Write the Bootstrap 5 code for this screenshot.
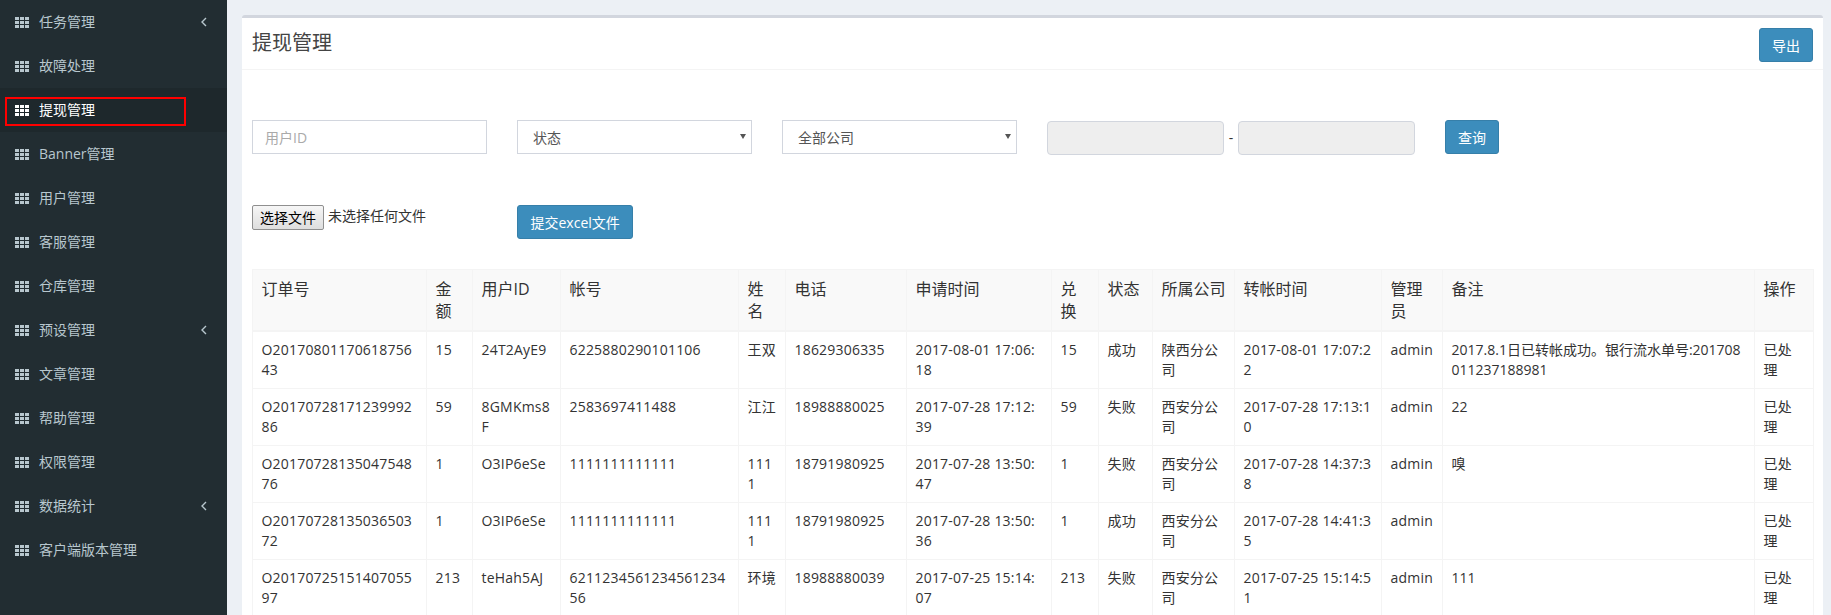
<!DOCTYPE html>
<html lang="zh-CN">
<head>
    <meta charset="UTF-8">
    <title>提现管理</title>
    <link href="https://cdn.jsdelivr.net/npm/bootstrap@5.3.3/dist/css/bootstrap.min.css" rel="stylesheet">
    <style>
        html, body { height: 100%; overflow: hidden; }
        body { background: #ecf0f5; color: #333; font-family: "Open Sans", "Noto Sans CJK SC", sans-serif; font-size: 14px; }
        .shell { height: 615px; overflow: hidden; }
        .side-menu { width: 227px; flex: none; background: #222d32; }
        .side-link { height: 44px; padding: 0 15px; color: #b8c7ce; font-size: 14px; text-decoration: none; gap: 10px; }
        .side-link span { padding-bottom: 2px; }
        .side-link.on { background: #1e282c; color: #fff; position: relative; }
        .side-link.on::after { content: ""; position: absolute; left: 5px; top: 9px; width: 181px; height: 29px; border: 2px solid #f00; }
        .side-link svg { flex: none; }
        .side-arrow { margin-left: auto; margin-right: 5px; }
        .work { flex: 1; min-width: 0; padding: 15px 8px 0 15px; }
        .panel-box { background: #fff; border-top: 3px solid #d2d6de; border-radius: 3px 3px 0 0; height: 700px; }
        .panel-head { height: 52px; padding: 10px 10px 0; border-bottom: 1px solid #f4f4f4; }
        .panel-title { font-size: 20px; color: #444; font-weight: 400; margin: 1px 0 0; line-height: 28px; }
        .blue-btn { background: #3c8dbc; border: 1px solid #367fa9; color: #fff; font-size: 14px; height: 34px; padding: 0 12.5px; border-radius: 3px; }
        .blue-btn:hover { background: #367fa9; color: #fff; }
        .short-btn { width: 54px; padding: 0; }
        .filter-row { padding: 50px 10px 0; }
        .filter-gap { margin-left: 30px; }
        .filter-field { width: 235px; height: 34px; border: 1px solid #d2d6de; border-radius: 0; font-size: 14px; padding: 0 12px; color: #555; background: #fff; }
        .filter-field::placeholder { color: #aaa; }
        .select-wrap { position: relative; width: 235px; }
        .select-wrap select { appearance: none; width: 100%; padding: 1px 15px 0; }
        .select-wrap::after { content: ""; position: absolute; right: 6px; top: 14px; border: 3px solid transparent; border-top: 5px solid #555; border-bottom: 0; }
        .date-range { height: 34px; }
        .date-field { width: 177px; height: 34px; margin-top: 1px; background: #eee; border: 1px solid #d2d6de; border-radius: 4px; }
        .date-dash { width: 14px; text-align: center; }
        .upload-row { padding: 51px 10px 0; }
        .file-pick { width: 235px; font-size: 14px; color: #333; gap: 4px; height: 34px; }
        .file-btn { font-size: 14px; height: 25px; width: 72px; padding: 0; border: 1px solid #8f8f8f; border-radius: 2px; background: linear-gradient(#f6f6f6, #dedede); color: #000; }
        .table-wrap { padding: 30px 10px 0; }
        .cash-table { table-layout: fixed; width: 1561px; border-collapse: collapse; color: #333; word-break: break-all; }
        .cash-table th, .cash-table td { padding: 8px 8.5px; border: 1px solid #f4f4f4; font-weight: 400; vertical-align: top; }
        .cash-table th { background: #f9f9f9; font-size: 16px; line-height: 22px; border-bottom-width: 2px; }
        .cash-table td { background: #fff; font-size: 14px; line-height: 20px; letter-spacing: .2px; }
        .cash-table td:nth-child(13) { letter-spacing: 0; }
    </style>
</head>
<body>
<div class="shell d-flex">
    <nav class="side-menu d-flex flex-column" id="menu"></nav>
    <main class="work">
        <div class="panel-box">
            <div class="panel-head d-flex justify-content-between align-items-start">
                <h3 class="panel-title">提现管理</h3>
                <button class="blue-btn short-btn" type="button">导出</button>
            </div>
            <div class="filter-row d-flex align-items-start">
                <input class="filter-field" type="text" placeholder="用户ID">
                <div class="select-wrap filter-gap"><select class="filter-field"><option>状态</option></select></div>
                <div class="select-wrap filter-gap"><select class="filter-field"><option>全部公司</option></select></div>
                <div class="date-range d-flex align-items-center filter-gap">
                    <input class="date-field" type="text" disabled>
                    <span class="date-dash">-</span>
                    <input class="date-field" type="text" disabled>
                </div>
                <button class="blue-btn short-btn filter-gap" type="button">查询</button>
            </div>
            <div class="upload-row d-flex align-items-start">
                <div class="file-pick d-flex align-items-start">
                    <button class="file-btn" type="button">选择文件</button>
                    <span>未选择任何文件</span>
                </div>
                <button class="blue-btn filter-gap" type="button">提交excel文件</button>
            </div>
            <div class="table-wrap">
                <table class="cash-table">
                    <colgroup id="cols"></colgroup>
                    <thead><tr id="head"></tr></thead>
                    <tbody id="rows"></tbody>
                </table>
            </div>
        </div>
    </main>
</div>
<script src="https://cdn.jsdelivr.net/npm/bootstrap@5.3.3/dist/js/bootstrap.bundle.min.js"></script>
<script>
    const gridIcon = '<svg width="14" height="11" viewBox="0 0 14 11" fill="currentColor"><rect width="4" height="3"/><rect x="5" width="4" height="3"/><rect x="10" width="4" height="3"/><rect y="4" width="4" height="3"/><rect x="5" y="4" width="4" height="3"/><rect x="10" y="4" width="4" height="3"/><rect y="8" width="4" height="3"/><rect x="5" y="8" width="4" height="3"/><rect x="10" y="8" width="4" height="3"/></svg>';
    const arrowIcon = '<svg class="side-arrow" width="6" height="10" viewBox="0 0 6 10" fill="none" stroke="currentColor" stroke-width="1.4"><path d="M5 1 1 5l4 4"/></svg>';
    const menu = [['任务管理',1],['故障处理'],['提现管理',0,1],['Banner管理'],['用户管理'],['客服管理'],['仓库管理'],['预设管理',1],['文章管理'],['帮助管理'],['权限管理'],['数据统计',1],['客户端版本管理']];
    document.getElementById('menu').innerHTML = menu.map(m =>
        `<a href="#" class="side-link d-flex align-items-center ${m[2] ? 'on' : ''}">${gridIcon}<span>${m[0]}</span>${m[1] ? arrowIcon : ''}</a>`).join('');

    const widths = [174,46,88,178,47,121,145,47,54,82,147,61,312,59];
    document.getElementById('cols').innerHTML = widths.map(w => `<col width="${w}">`).join('');

    const heads = ['订单号','金额','用户ID','帐号','姓名','电话','申请时间','兑换','状态','所属公司','转帐时间','管理员','备注','操作'];
    document.getElementById('head').innerHTML = heads.map(h => `<th>${h}</th>`).join('');

    const rows = [
        ['O2017080117061875643','15','24T2AyE9','6225880290101106','王双','18629306335','2017-08-01 17:06:18','15','成功','陕西分公司','2017-08-01 17:07:22','admin','2017.8.1日已转帐成功。银行流水单号:201708011237188981','已处理'],
        ['O2017072817123999286','59','8GMKms8F','2583697411488','江江','18988880025','2017-07-28 17:12:39','59','失败','西安分公司','2017-07-28 17:13:10','admin','22','已处理'],
        ['O2017072813504754876','1','O3IP6eSe','1111111111111','1111','18791980925','2017-07-28 13:50:47','1','失败','西安分公司','2017-07-28 14:37:38','admin','嗅','已处理'],
        ['O2017072813503650372','1','O3IP6eSe','1111111111111','1111','18791980925','2017-07-28 13:50:36','1','成功','西安分公司','2017-07-28 14:41:35','admin','','已处理'],
        ['O2017072515140705597','213','teHah5AJ','621123456123456123456','环境','18988880039','2017-07-25 15:14:07','213','失败','西安分公司','2017-07-25 15:14:51','admin','111','已处理']
    ];
    document.getElementById('rows').innerHTML = rows.map(r =>
        '<tr>' + r.map(c => `<td>${c}</td>`).join('') + '</tr>').join('');
</script>
</body>
</html>
